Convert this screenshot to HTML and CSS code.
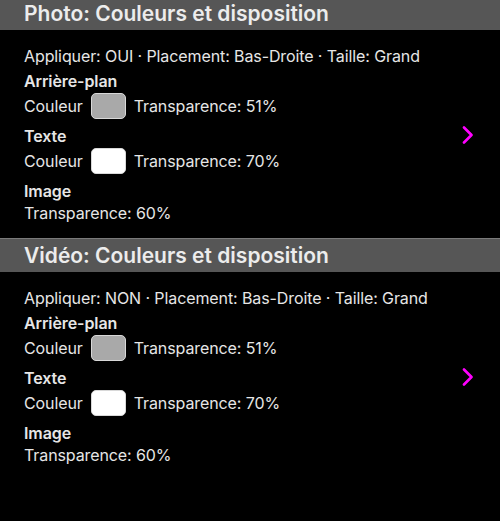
FILE: index.html
```html
<!DOCTYPE html>
<html lang="fr">
<head>
<meta charset="utf-8">
<link rel="stylesheet" href="styles.css">
</head>
<body>
<div class="list">
  <section class="section">
    <h2 class="header">Photo: Couleurs et disposition</h2>
    <div class="content">
      <div class="info">
        <p class="line">Appliquer: OUI · Placement: Bas-Droite · Taille: Grand</p>
        <div class="group first">
          <p class="title">Arrière-plan</p>
          <div class="row"><span>Couleur</span><span class="swatch gray"></span><span>Transparence: 51%</span></div>
        </div>
        <div class="group">
          <p class="title">Texte</p>
          <div class="row"><span>Couleur</span><span class="swatch white"></span><span>Transparence: 70%</span></div>
        </div>
        <div class="group">
          <p class="title">Image</p>
          <p class="line">Transparence: 60%</p>
        </div>
      </div>
      <svg class="chevron" width="12" height="18" viewBox="0 0 12 18"><path d="M2 1.5 L9.5 9 L2 16.5" fill="none" stroke="#ff00ff" stroke-width="2.6" stroke-linecap="round" stroke-linejoin="round"/></svg>
    </div>
  </section>
  <section class="section">
    <h2 class="header">Vidéo: Couleurs et disposition</h2>
    <div class="content">
      <div class="info">
        <p class="line">Appliquer: NON · Placement: Bas-Droite · Taille: Grand</p>
        <div class="group first">
          <p class="title">Arrière-plan</p>
          <div class="row"><span>Couleur</span><span class="swatch gray"></span><span>Transparence: 51%</span></div>
        </div>
        <div class="group">
          <p class="title">Texte</p>
          <div class="row"><span>Couleur</span><span class="swatch white"></span><span>Transparence: 70%</span></div>
        </div>
        <div class="group">
          <p class="title">Image</p>
          <p class="line">Transparence: 60%</p>
        </div>
      </div>
      <svg class="chevron" width="12" height="18" viewBox="0 0 12 18"><path d="M2 1.5 L9.5 9 L2 16.5" fill="none" stroke="#ff00ff" stroke-width="2.6" stroke-linecap="round" stroke-linejoin="round"/></svg>
    </div>
  </section>
</div>
</body>
</html>
```

FILE: styles.css
```css
html, body {
  margin: 0;
  padding: 0;
  background: #000;
}
body {
  font-family: Inter, "Noto Sans", "Liberation Sans", sans-serif;
  color: #e6e6e6;
  height: 521px;
  overflow: hidden;
}
p, h2 { margin: 0; }
.list {
  margin-top: -4px;
  display: flex;
  flex-direction: column;
}
.header {
  height: 34px;
  box-sizing: border-box;
  border-top: 1px solid #7a7a7a;
  background: #565656;
  color: #ececec;
  font-size: 21px;
  font-weight: 600;
  line-height: 33px;
  padding-left: 24px;
}
.content {
  display: flex;
  align-items: center;
  padding: 16px 26px 15px 24px;
}
.info {
  flex: 1;
  display: flex;
  flex-direction: column;
  gap: 7px;
  letter-spacing: -0.1px;
}
.line {
  font-size: 16px;
  line-height: 20px;
}
.title {
  font-size: 16px;
  font-weight: 600;
  line-height: 20px;
}
.group {
  display: flex;
  flex-direction: column;
  gap: 2px;
}
.group.first { margin-top: -2px; }
.row {
  display: flex;
  align-items: center;
  gap: 8px;
  font-size: 16px;
  line-height: 20px;
  height: 26px;
}
.swatch {
  width: 35px;
  height: 26px;
  box-sizing: border-box;
  border-radius: 5px;
  border: 1px solid #d8d8d8;
}
.swatch.gray { background: #a9a9a9; }
.swatch.white { background: #ffffff; }
.chevron {
  flex: none;
}
```
